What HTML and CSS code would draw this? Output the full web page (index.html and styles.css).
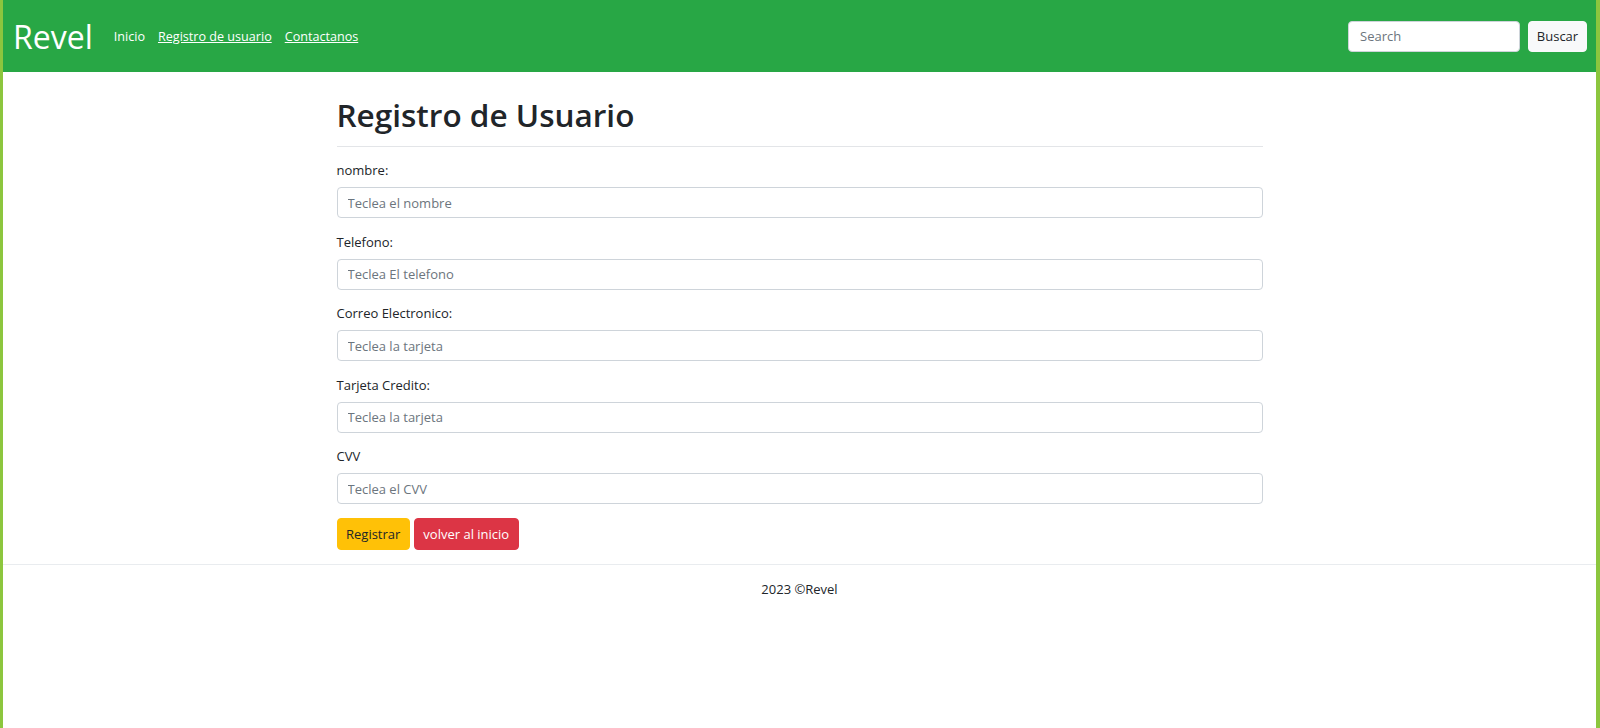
FILE: index.html
```html
<!DOCTYPE html>
<html lang="es">
<head>
<meta charset="utf-8">
<title>Registro de Usuario</title>
<link rel="stylesheet" href="styles.css">
</head>
<body>
<div class="page">
  <header class="navbar">
    <a class="brand" href="#">Revel</a>
    <nav class="nav-links">
      <a class="nav-link plain" href="#">Inicio</a>
      <a class="nav-link" href="#">Registro de usuario</a>
      <a class="nav-link" href="#">Contactanos</a>
    </nav>
    <form class="search">
      <input class="search-input" type="text" placeholder="Search">
      <button class="btn btn-light" type="button">Buscar</button>
    </form>
  </header>

  <main class="container">
    <h1 class="title">Registro de Usuario</h1>
    <hr class="rule">
    <form class="reg-form">
      <div class="group">
        <label class="label">nombre:</label>
        <input class="control" type="text" placeholder="Teclea el nombre">
      </div>
      <div class="group">
        <label class="label">Telefono:</label>
        <input class="control" type="text" placeholder="Teclea El telefono">
      </div>
      <div class="group">
        <label class="label">Correo Electronico:</label>
        <input class="control" type="text" placeholder="Teclea la tarjeta">
      </div>
      <div class="group">
        <label class="label">Tarjeta Credito:</label>
        <input class="control" type="text" placeholder="Teclea la tarjeta">
      </div>
      <div class="group">
        <label class="label">CVV</label>
        <input class="control" type="text" placeholder="Teclea el CVV">
      </div>
      <div class="actions">
        <button class="btn btn-warning" type="button">Registrar</button>
        <button class="btn btn-danger" type="button">volver al inicio</button>
      </div>
    </form>
  </main>

  <footer class="footer">
    <p class="footer-text">2023 ©Revel</p>
  </footer>
</div>
</body>
</html>
```

FILE: styles.css
```css
* { box-sizing: border-box; }

html, body {
  margin: 0;
  padding: 0;
  height: 100%;
}

body {
  font-family: "Open Sans", "Noto Sans", sans-serif;
  font-size: 13px;
  color: #212529;
  background: #8cc63e;
}

.page {
  margin: 0 4px 0 3px;
  min-height: 100%;
  background: #ffffff;
}

.navbar {
  height: 72px;
  background: #28a745;
  display: flex;
  align-items: center;
  padding: 0 9px 0 10px;
}

.brand {
  color: #ffffff;
  text-decoration: none;
  font-size: 32px;
  line-height: 40px;
  margin-right: 21px;
  margin-top: 2px;
}

.nav-links {
  display: flex;
  align-items: center;
  gap: 13px;
  margin-top: 1px;
}

.nav-link {
  color: #ffffff;
  font-size: 12.6px;
  line-height: 20px;
  text-decoration: underline;
}

.nav-link.plain { text-decoration: none; }

.search {
  margin-left: auto;
  display: flex;
  align-items: center;
  gap: 8px;
}

.search-input {
  width: 172px;
  height: 31px;
  border: 1px solid #ced4da;
  border-radius: 4px;
  padding: 0 11px;
  font-family: inherit;
  font-size: 13px;
  color: #212529;
  background: #ffffff;
}

.search-input::placeholder,
.control::placeholder { color: #6c757d; }

.btn {
  height: 31px;
  border: 1px solid transparent;
  border-radius: 4px;
  padding: 0 8.5px;
  font-family: inherit;
  font-size: 13px;
  line-height: 1;
  cursor: pointer;
}

.btn-light {
  background: #f8f9fa;
  border-color: #f8f9fa;
  color: #212529;
  width: 59px;
  padding: 0;
}

.btn-warning {
  background: #ffc107;
  border-color: #ffc107;
  color: #212529;
  height: 32px;
}

.btn-danger {
  background: #dc3545;
  border-color: #dc3545;
  color: #ffffff;
  height: 32px;
}

.container {
  width: 926px;
  margin: 0 auto;
  padding-top: 24px;
}

.title {
  margin: 0;
  font-size: 31.5px;
  font-weight: 600;
  line-height: 38px;
  color: #212529;
}

.rule {
  margin: 12px 0 13px;
  border: 0;
  border-top: 1px solid #e3e5e8;
}

.reg-form {
  display: flex;
  flex-direction: column;
}

.group {
  display: flex;
  flex-direction: column;
  margin-bottom: 13.5px;
}

.label {
  line-height: 20px;
  margin-bottom: 7px;
}

.control {
  width: 100%;
  height: 31px;
  border: 1px solid #ced4da;
  border-radius: 4px;
  padding: 0 10px;
  font-family: inherit;
  font-size: 13px;
  color: #212529;
  background: #ffffff;
}

.actions {
  display: flex;
  gap: 4px;
  padding-top: 0.5px;
}

.footer {
  margin-top: 14px;
  border-top: 1px solid #e9ecef;
  text-align: center;
}

.footer-text {
  margin: 0;
  padding-top: 14px;
  line-height: 20px;
}
```
